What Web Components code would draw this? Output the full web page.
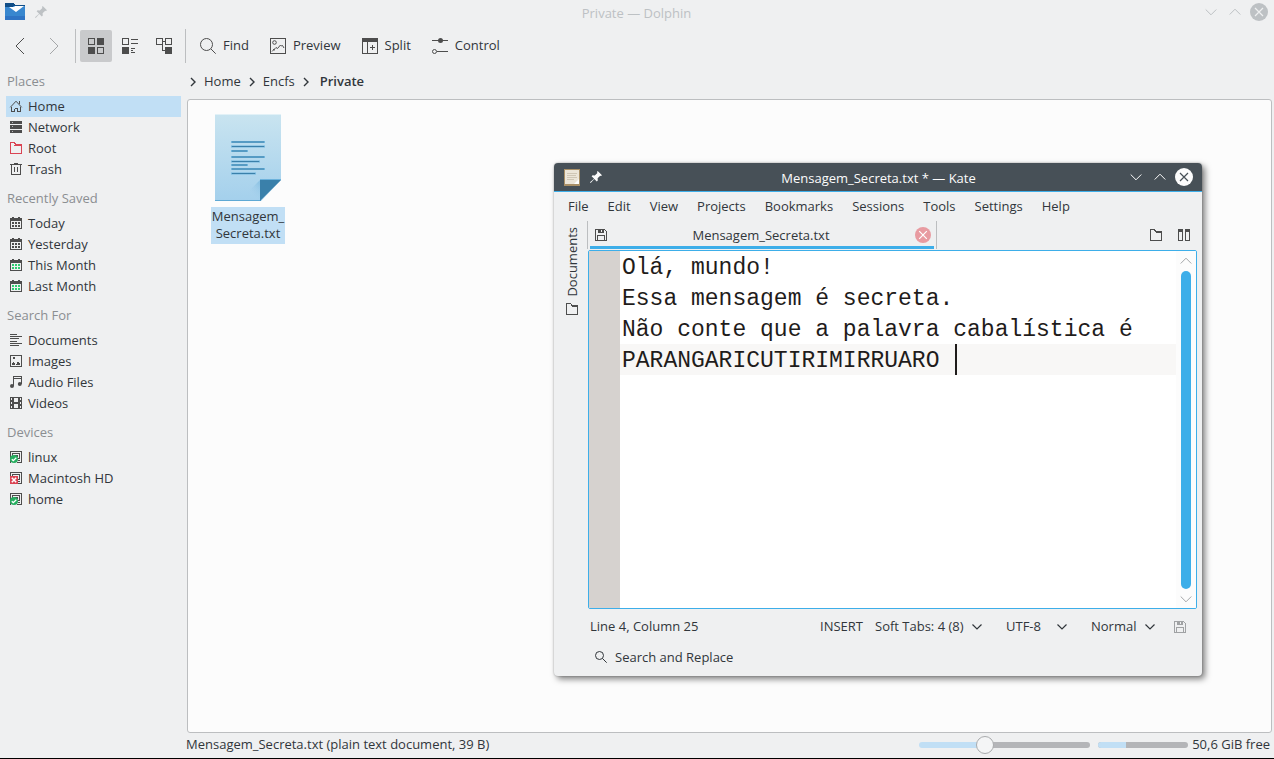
<!DOCTYPE html>
<html lang="en">
<head>
<meta charset="utf-8">
<title>Private — Dolphin</title>
<style>
html, body { margin: 0; height: 100%; }
body { font: 13px/17px "Open Sans", "Noto Sans", sans-serif; color: #31363b; background: #000; overflow: hidden; }
</style>
</head>
<body>
<desktop-screen></desktop-screen>
<script>
const RESET = `
*, *::before { box-sizing: border-box; }
:host { display: block; box-sizing: border-box; }
:host([hidden]) { display: none; }
button, select, input { font: inherit; color: inherit; background: none; border: 0; margin: 0; padding: 0; }
a { color: inherit; text-decoration: none; }
`;
function define(name, render) {
  customElements.define(name, class extends HTMLElement {
    constructor() { super(); this.attachShadow({ mode: "open" }); }
    connectedCallback() {
      if (this.shadowRoot.childNodes.length) return;
      const t = document.createElement("template");
      const { css, html } = render(this);
      t.innerHTML = `<style>${RESET}${css}</style>${html}`;
      this.shadowRoot.append(t.content.cloneNode(true));
    }
  });
}

const F = 'fill="currentColor" stroke="none"';
const CAL = dots => `<path ${F} d="M0 1h12v3H0zM2 0h2v2H2zM8 0h2v2H8z"/><path stroke="#eff0f1" d="M5 .5h2"/><path d="M.5 2v9.500h11V2"/><path fill="${dots}" stroke="none" d="M2 5h2v2H2zM5 5h2v2H5zM8 5h2v2H8zM2 8h2v2H2zM5 8h2v2H5zM8 8h2v2H8z"/>`;
const DISK = `<path d="M.5 12V.5h11v11H7"/><path d="M2.500 6V2.500h7v5h-3"/><path ${F} d="M4 4h4v2H4zM8 9h2v1H8z"/>`;
const SAVE = `<path d="M.5.5h9l2 2v9H.5z"/><path d="M2.500 11V6.500h7V11"/><path ${F} d="M3 1h6v3H3z"/><path fill="#eff0f1" stroke="none" d="M6 1h1v2H6z"/>`;
// name: [size, markup]; strokes are one pixel wide on the icon's own grid
const ICONS = {
  back: [16, `<path class="s" d="M12 0 4 8l8 8"/>`],
  forward: [16, `<path class="s" d="M4 0l8 8-8 8"/>`],
  grid: [16, `<path d="M.5.5h6v6h-6zM9.500 9.500h6v6h-6z"/><path ${F} d="M9 0h7v7H9zM0 9h7v7H0z"/>`],
  compact: [16, `<path d="M.5.5h6v6h-6zM9 1.500h7M9 5.500h7M9 10.500h4M9 12.500h2M9 14.500h4"/><path ${F} d="M0 9h7v7H0z"/>`],
  tree: [16, `<path d="M.5.5h6v6h-6zM9.500.5h6v6h-6zM6.500 3.500h3M6.500 6.500v6H9"/><path ${F} d="M9 9h7v7H9z"/>`],
  find: [16, `<circle class="s" cx="6.5" cy="6.5" r="6"/><path class="s" d="M11 11l4.700 4.700"/>`],
  search: [12, `<circle class="s" cx="4.500" cy="4.500" r="4"/><path class="s" d="M7.500 7.500l4.200 4.200"/>`],
  preview: [16, `<path d="M.5.5h15v15H.5z"/><circle class="s" cx="4.500" cy="4.500" r="1.800"/><path class="s" d="M2 13.500l4-4 1.500 1 3-3.500 1 1 1-.5 1.500 2.500M3 11.500l2 .5"/>`],
  split: [16, `<path d="M.5.5h15v15H.5zM5.500 3v13M8 9.500h5M10.500 7v5"/><path ${F} d="M0 0h16v4H0z"/>`],
  control: [16, `<path d="M0 2.500h16M5 13.500h11"/><circle class="s" cx="8.500" cy="2.500" r="2.500" fill="currentColor" stroke="none"/><circle class="s" cx="2.500" cy="13.500" r="2"/>`],
  home: [12, `<path class="s" d="M.3 7.300 6 1.200l5.700 6.100"/><path d="M1.500 7v4.500h3V8.500M10.500 7v4.500h-3V8.500M9.500 1v3M4.500 8.500h3"/>`],
  network: [12, `<path ${F} d="M0 0h12v3H0zM0 4h12v4H0zM0 9h12v3H0z"/><path stroke="#b9babb" d="M2 1.500h1M2 5.500h1M2 10.500h1"/>`],
  root: [12, `<path d="M.5 11.500V.5h4l1 2h6v9z"/><path ${F} d="M0 4h3l2-2h7v2H0z"/>`],
  folder: [12, `<path d="M.5 11.500V.5h4l1 2h6v9z"/><path ${F} d="M5 2h7v2H6z"/>`],
  trash: [12, `<path d="M0 1.500h12M1.500 2v9.500h9V2M4.500 4v5M7.500 4v5M4 .5h4"/>`],
  calendar: [12, CAL("currentColor")],
  month: [12, CAL("#2ecc71")],
  documents: [12, `<path d="M0 .5h7M0 2.500h12M0 4.500h9M0 7.500h7M0 9.500h12M0 11.500h9"/>`],
  images: [12, `<path d="M.5.5h11v11H.5z"/><path ${F} d="M3 2h2v2H3zM2 8h1V7h1v1h1v2H2zM6 9h1V8h3v2H6zM7 7h2v1H7z"/>`],
  audio: [12, `<path ${F} d="M3 0h9v3H3z"/><path stroke="#eff0f1" d="M4 1.500h7"/><path d="M3.500 2v8M11.500 2v6"/><circle class="s" cx="2" cy="10" r="2" ${F}/><circle class="s" cx="9.800" cy="8" r="2" ${F}/>`],
  videos: [12, `<path ${F} d="M0 0h4v12H0zM8 0h4v12H8zM4 0h4v1H4zM4 5h4v2H4zM4 11h4v1H4z"/><path fill="#eff0f1" stroke="none" d="M1 1h1v2H1zM1 5h1v2H1zM1 9h1v2H1zM10 1h1v2h-1zM10 5h1v2h-1zM10 9h1v2h-1z"/>`],
  mounted: [12, DISK + `<circle class="s" cx="4" cy="8" r="4" fill="#27ae60" stroke="none"/><path class="s" stroke="#fff" stroke-width="1.300" d="M1.800 8.200l1.500 1.500 3-3"/>`],
  broken: [12, DISK + `<path fill="#da4453" stroke="none" d="M0 4h8v8H0z"/><path class="s" stroke="#fff" stroke-width="1.600" d="M1.800 5.800l4.400 4.400M6.200 5.800l-4.400 4.400"/>`],
  save: [12, SAVE],
  columns: [12, `<path d="M.5.5h4v11h-4zM7.500.5h4v11h-4z"/><path ${F} d="M0 0h5v3H0zM7 0h5v3H7z"/>`],
  crumb: [10, `<path class="s" stroke-width="1.400" d="M3 1l4 4-4 4"/>`],
  down: [12, `<path class="s" d="M.7 3.500 6 8.800l5.300-5.300"/>`],
  up: [12, `<path class="s" d="M.7 8.500 6 3.200l5.300 5.300"/>`],
  menu: [10, `<path class="s" stroke-width="1.200" d="M.5 2.500 5 7l4.500-4.500"/>`],
  close: [18, `<circle class="s" cx="9" cy="9" r="9" ${F}/><path class="s" stroke="var(--cut, #eff0f1)" stroke-width="1.200" d="M5 5l8 8M13 5l-8 8"/>`],
  tabclose: [16, `<circle class="s" cx="8" cy="8" r="8" ${F}/><path class="s" stroke="#fff" stroke-width="1.200" d="M4.200 4.200l7.600 7.600M11.800 4.200l-7.600 7.600"/>`],
  pin: [12, `<path class="s" ${F} d="M7.700 0 12 4.200l-1 .8-.8-.3-2.600 2.600.2 2.200-1 .9-2.500-2.500L.7 12 0 11.300l4.100-3.600L1.600 5.300l1-1 2.200.3 2.600-2.700L7 1z"/>`],
  dolphin: [20, `<g stroke="none"><path fill="#104d86" d="M0 1h8l2 2h10v8H0z"/><path fill="#3887cf" d="M0 5h7l2-1h11v14H0z"/><path fill="#2f74c4" d="M0 14h20v4H0z"/><path class="s" fill="#fff" d="M4 5h5l1-1h9l-8 6z"/></g>`],
  kate: [16, `<g stroke="none"><path fill="#a98f66" d="M0 0h16v17H0z"/><path fill="#ece5d8" d="M1 1h14v14H1z"/></g><path stroke="#cfc6b5" d="M3 4.500h10M3 6.500h9M3 8.500h10M3 10.500h7"/><path class="s" fill="#fff" stroke="none" d="M15 10v5h-5z"/>`]
};
define("ui-icon", el => {
  const [size, body] = ICONS[el.getAttribute("name")];
  return {
    css: `:host { flex: none; width: ${size}px; height: ${size}px; } svg { display: block; overflow: visible; } svg * { shape-rendering: crispEdges; } svg .s { shape-rendering: auto; }`,
    html: `<svg width="${size}" height="${size}" viewBox="0 0 ${size} ${size}" fill="none" stroke="currentColor" aria-hidden="true">${body}</svg>`
  };
});

define("window-title", () => ({
  css: `:host { display: grid; grid-template-columns: 1fr auto 1fr; align-items: center; }
    .start, .end { display: flex; align-items: center; }
    .start { gap: 10px; }
    .end { justify-content: flex-end; gap: 12px; }
    .end button { display: block; }
    .end button:last-child { margin-left: -3px; }
    .text { padding-top: 2px; }`,
  html: `<div class="start"><slot name="icon"></slot><ui-icon name="pin"></ui-icon></div>
    <div class="text"><slot></slot></div>
    <div class="end"><button aria-label="Minimize"><ui-icon name="down"></ui-icon></button>
    <button aria-label="Maximize"><ui-icon name="up"></ui-icon></button>
    <button aria-label="Close"><ui-icon name="close"></ui-icon></button></div>`
}));

define("tool-button", el => ({
  css: `button { display: flex; align-items: center; justify-content: center; gap: 7px; height: 32px; min-width: 32px; padding: 0 8px; border-radius: 2px; color: inherit; }
    :host([checked]) button { background: #c9cacc; }
    ui-icon { color: #4d4d4d; }
    :host([disabled]) ui-icon { color: #a5a7a9; }
    span { padding-bottom: 2px; } span:empty { display: none; }`,
  html: `<button aria-label="${el.getAttribute("label") || el.textContent}" ${el.hasAttribute("disabled") ? "disabled" : ""}><ui-icon name="${el.getAttribute("icon")}"></ui-icon><span>${el.textContent ? "<slot></slot>" : ""}</span></button>`
}));

define("tool-bar", () => ({
  css: `:host { display: flex; align-items: center; height: 40px; padding-left: 4px; }
    .group { display: flex; gap: 2px; padding-right: 5px; height: 34px; align-items: center; }
    .group + .group { padding-left: 4px; border-left: 1px solid #bcbec0; }
    .group + .group.text { gap: 5px; padding-left: 6px; }`,
  html: `<div class="group"><tool-button icon="back" label="Back"></tool-button><tool-button icon="forward" label="Forward" disabled></tool-button></div>
    <div class="group"><tool-button icon="grid" label="Icons" checked></tool-button><tool-button icon="compact" label="Compact"></tool-button><tool-button icon="tree" label="Details"></tool-button></div>
    <div class="group text"><tool-button icon="find">Find</tool-button><tool-button icon="preview">Preview</tool-button><tool-button icon="split">Split</tool-button><tool-button icon="control">Control</tool-button></div>`
}));

define("place-link", el => ({
  css: `a { display: flex; align-items: center; gap: 6px; height: 21px; padding: 0 4px; }
    :host([selected]) a { background: #c1dff5; }
    ui-icon { color: var(--tint, #4d4d4d); margin-bottom: 1px; }`,
  html: `<a href="#"><ui-icon name="${el.getAttribute("icon")}"></ui-icon><slot></slot></a>`
}));
define("place-group", el => ({
  css: `:host { padding: 0 6px 3px; }
    h2 { margin: 0; padding-left: 1px; font: inherit; line-height: 30px; color: #8b8e91; }`,
  html: `<h2>${el.getAttribute("heading")}</h2><slot></slot>`
}));
define("places-panel", () => ({
  css: `:host { width: 187px; } place-link.danger { --tint: #da4453; }`,
  html: `<nav aria-label="Places">
    <place-group heading="Places"><place-link icon="home" selected>Home</place-link><place-link icon="network">Network</place-link><place-link icon="root" class="danger">Root</place-link><place-link icon="trash">Trash</place-link></place-group>
    <place-group heading="Recently Saved"><place-link icon="calendar">Today</place-link><place-link icon="calendar">Yesterday</place-link><place-link icon="month">This Month</place-link><place-link icon="month">Last Month</place-link></place-group>
    <place-group heading="Search For"><place-link icon="documents">Documents</place-link><place-link icon="images">Images</place-link><place-link icon="audio">Audio Files</place-link><place-link icon="videos">Videos</place-link></place-group>
    <place-group heading="Devices"><place-link icon="mounted">linux</place-link><place-link icon="broken">Macintosh HD</place-link><place-link icon="mounted">home</place-link></place-group></nav>`
}));

define("bread-crumbs", () => ({
  css: `nav { display: flex; align-items: center; gap: 6px; height: 33px; padding: 0 0 2px 1px; } strong { padding-left: 3px; font-weight: 600; }`,
  html: `<nav aria-label="Location"><ui-icon name="crumb"></ui-icon><a href="#">Home</a><ui-icon name="crumb"></ui-icon><a href="#">Encfs</a><ui-icon name="crumb"></ui-icon><strong>Private</strong></nav>`
}));

define("file-item", () => ({
  css: `:host { width: 74px; text-align: center; }
    a { display: block; } svg { display: block; margin: 0 auto 6px; }
    span { display: block; background: #c1dff5; padding: 1px 0 2px; }`,
  html: `<a href="#"><svg width="66" height="87" viewBox="0 0 66 87" aria-hidden="true">
    <defs><linearGradient id="p" x2="0" y2="1"><stop stop-color="#c9e4f0"/><stop offset="1" stop-color="#a4d0ec"/></linearGradient>
    <linearGradient id="s" x1="1" x2="0" y2="1"><stop offset=".1" stop-color="#7dbae0"/><stop offset=".6" stop-color="#a8d2ec" stop-opacity="0"/></linearGradient></defs>
    <path fill="url(#p)" d="M0 0h66v66L46 87H0z"/><path fill="#e2f1f7" d="M0 0h66v1H0z"/>
    <path fill="url(#s)" d="M45 66v20H25z" opacity=".6"/><path fill="#5fa9d4" d="M0 86h46v1H0z"/>
    <path fill="#3a80aa" d="M45 66h21L45 87z"/><path fill="#6cb2dc" d="M45 65h21v1H45z"/>
    <path stroke="#72b6dd" stroke-width="2" d="M16 28h34M16 32.500h34M16 37h17M16 43h34M16 47.500h29M16 51h17M16 55h34M16 59.500h25"/>
    <path stroke="#3a80aa" d="M17 28h32M17 32.500h32M17 37h15M17 43h32M17 47.500h27M17 51h15M17 55h32M17 59.500h23"/></svg>
    <span><slot></slot></span></a>`
}));

define("status-bar", () => ({
  css: `:host { display: flex; align-items: center; height: 25px; padding: 0 4px 2px 0; }
    .info { flex: 1; }
    input { -webkit-appearance: none; appearance: none; width: 171px; height: 18px; }
    input::-webkit-slider-runnable-track { height: 6px; border-radius: 3px; background: linear-gradient(90deg, #c1dff5 38%, #b4b5b8 38%); }
    input::-webkit-slider-thumb { -webkit-appearance: none; width: 18px; height: 18px; margin-top: -6px; border-radius: 9px; border: 1px solid #a9abad; background: #f4f5f6; }
    progress { -webkit-appearance: none; appearance: none; width: 90px; height: 6px; margin: 0 4px 0 8px; border: 0; border-radius: 3px; overflow: hidden; }
    progress::-webkit-progress-bar { background: #b4b5b8; }
    progress::-webkit-progress-value { background: #c1dff5; }`,
  html: `<span class="info">Mensagem_Secreta.txt (plain text document, 39 B)</span>
    <input type="range" min="0" max="100" value="37" aria-label="Icon size"><progress max="100" value="31" aria-label="Used space"></progress><span>50,6 GiB free</span>`
}));

define("dolphin-window", () => ({
  css: `:host { display: flex; flex-direction: column; height: 100%; background: #eff0f1; }
    window-title { height: 26px; padding: 0 6px 2px 5px; color: #bdc1c4; --cut: #eff0f1; }
    .main { flex: 1; min-height: 0; display: flex; }
    .view { flex: 1; min-width: 0; display: flex; flex-direction: column; padding-right: 2px; }
    .files { flex: 1; border: 1px solid #bcbec0; border-radius: 3px; background: #fcfcfc; padding: 14px 23px; }
    status-bar { margin: 0 -2px 0 -1px; }`,
  html: `<window-title><ui-icon slot="icon" name="dolphin"></ui-icon>Private — Dolphin</window-title>
    <tool-bar></tool-bar>
    <div class="main"><places-panel></places-panel>
      <div class="view"><bread-crumbs></bread-crumbs><div class="files"><file-item>Mensagem_<br>Secreta.txt</file-item></div><status-bar></status-bar></div></div>`
}));

define("menu-bar", () => ({
  css: `:host { display: flex; align-items: center; gap: 19px; height: 29px; padding-left: 14px; }`,
  html: ["File", "Edit", "View", "Projects", "Bookmarks", "Sessions", "Tools", "Settings", "Help"].map(t => `<button>${t}</button>`).join("")
}));

define("document-tabs", () => ({
  css: `:host { display: flex; height: 29px; }
    .tab { display: flex; align-items: center; width: 350px; height: 28px; padding: 0 5px 0 7px; border: solid #bcbec0; border-width: 0 1px; position: relative; }
    .tab::before { content: ""; position: absolute; left: 2px; right: 2px; bottom: 0; height: 3px; background: #3daee9; }
    .name { flex: 1; }
    .actions { flex: 1; display: flex; align-items: center; justify-content: flex-end; gap: 16px; padding: 0 7px 1px 0; }
    ui-icon { color: #4d4d4d; } ui-icon[name=tabclose] { color: #e89ba1; }`,
  html: `<div class="tab"><ui-icon name="save"></ui-icon><button class="name">Mensagem_Secreta.txt</button><button aria-label="Close document"><ui-icon name="tabclose"></ui-icon></button></div>
    <div class="actions"><button aria-label="Quick open"><ui-icon name="folder"></ui-icon></button><button aria-label="Split view"><ui-icon name="columns"></ui-icon></button></div>`
}));

define("text-editor", () => ({
  css: `:host { display: flex; border: 1px solid #3daee9; border-radius: 2px; background: #fff; overflow: hidden; }
    .gutter { width: 31px; background: #d6d2cf; }
    .page { flex: 1; display: grid; position: relative; font: 23px/31px "Liberation Mono", monospace; background: linear-gradient(#f8f7f6, #f8f7f6) 0 93px / 100% 31px no-repeat; }
    textarea { font: inherit; color: #1f1c1b; border: 0; margin: 0; padding: 2px 0 0 2px; background: none; resize: none; outline: 0; overflow: hidden; white-space: pre; }
    .caret { position: absolute; left: calc(4px + 24ch); top: 93px; width: 2px; height: 31px; background: #1f1c1b; }
    .bar { width: 20px; display: flex; flex-direction: column; align-items: center; padding: 4px 0 3px; background: #fcfcfc; color: #a5a7a9; }
    .thumb { flex: 1; width: 10px; margin: 4px 0; border-radius: 5px; background: #3daee9; }`,
  html: `<div class="gutter"></div><div class="page"><textarea aria-label="Document text" spellcheck="false">Olá, mundo!
Essa mensagem é secreta.
Não conte que a palavra cabalística é
PARANGARICUTIRIMIRRUARO </textarea><div class="caret"></div></div>
    <div class="bar"><ui-icon name="up"></ui-icon><div class="thumb"></div><ui-icon name="down"></ui-icon></div>`
}));

define("drop-down", el => ({
  css: `:host { display: inline-grid; align-items: center; }
    select, ui-icon { grid-area: 1 / 1; }
    select { -webkit-appearance: none; appearance: none; padding-right: var(--room, 26px); }
    ui-icon { justify-self: end; pointer-events: none; }`,
  html: `<select aria-label="${el.getAttribute("label")}"><option>${el.getAttribute("value")}</option></select><ui-icon name="menu"></ui-icon>`
}));

define("editor-status", () => ({
  css: `:host { display: flex; align-items: center; height: 35px; padding: 0 11px 0 3px; }
    .pos { flex: 1; } .mode { margin-right: 12px; }
    drop-down + drop-down { margin-left: 24px; }
    .tight { --room: 18px; }
    .save { margin-left: 19px; color: #a0a2a4; }`,
  html: `<span class="pos">Line 4, Column 25</span><button class="mode">INSERT</button><drop-down class="tight" label="Indentation" value="Soft Tabs: 4 (8)"></drop-down><drop-down label="Encoding" value="UTF-8"></drop-down><drop-down class="tight" label="Syntax" value="Normal"></drop-down><button class="save" aria-label="Save"><ui-icon name="save"></ui-icon></button>`
}));

define("kate-window", () => ({
  css: `:host { display: flex; flex-direction: column; background: #eff0f1; border-radius: 4px; box-shadow: 3px 3px 6px rgba(0,0,0,.5), 0 0 2px rgba(0,0,0,.3); overflow: hidden; }
    window-title { height: 29px; padding: 0 9px 0 10px; color: #fcfcfc; background: #475057; border-bottom: 1px solid #3daee9; --cut: #475057; }
    .main { flex: 1; min-height: 0; display: flex; }
    .rail { width: 33px; padding: 6px 0 0 6px; }
    .rail button { display: flex; align-items: center; gap: 6px; width: 24px; writing-mode: vertical-rl; transform: rotate(180deg); }
    .rail ui-icon { color: #4d4d4d; transform: rotate(180deg); }
    .column { flex: 1; min-width: 0; display: flex; flex-direction: column; padding-right: 5px; }
    text-editor { flex: 1; margin-left: 1px; }
    .search { display: flex; align-items: center; gap: 8px; height: 32px; padding: 0 0 6px 8px; }`,
  html: `<window-title><ui-icon slot="icon" name="kate"></ui-icon>Mensagem_Secreta.txt * — Kate</window-title>
    <menu-bar></menu-bar>
    <div class="main"><div class="rail"><button><ui-icon name="folder"></ui-icon>Documents</button></div>
    <div class="column"><document-tabs></document-tabs><text-editor></text-editor><editor-status></editor-status><button class="search"><ui-icon name="search"></ui-icon>Search and Replace</button></div></div>`
}));

define("desktop-screen", () => ({
  css: `:host { position: relative; height: 100vh; padding-bottom: 1px; }
    kate-window { position: absolute; left: 554px; top: 163px; width: 648px; height: 513px; }`,
  html: `<dolphin-window></dolphin-window><kate-window></kate-window>`
}));
</script>
</body>
</html>
